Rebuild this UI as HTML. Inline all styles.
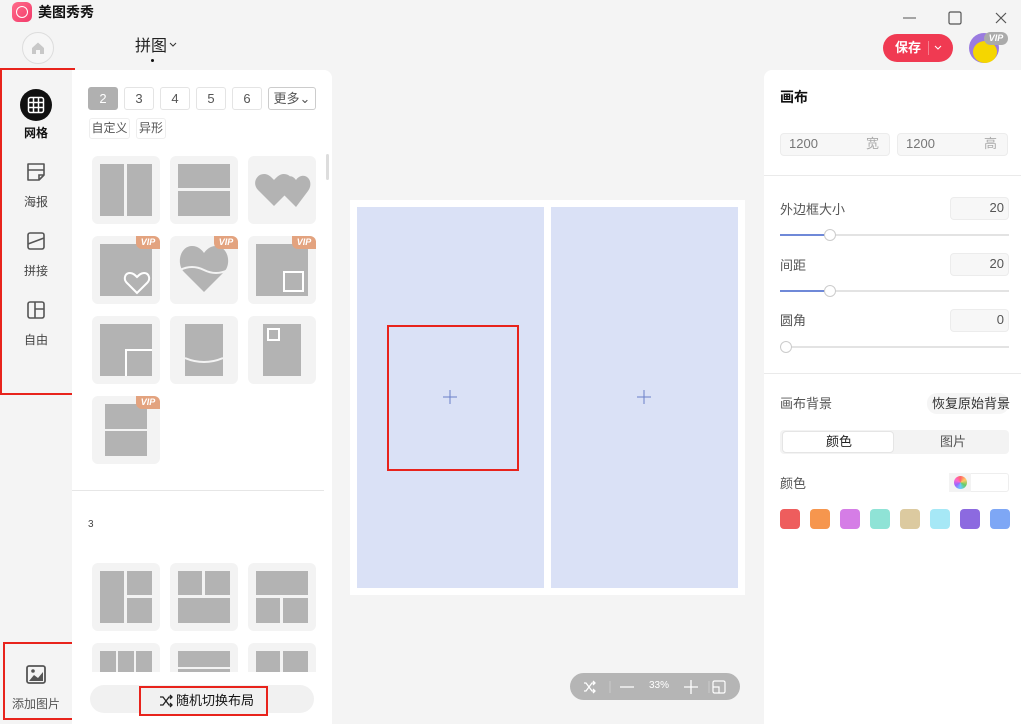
<!DOCTYPE html>
<html><head><meta charset="utf-8"><style>
*{margin:0;padding:0;box-sizing:border-box}
body{width:1021px;height:724px;background:#f4f4f4;position:relative;overflow:hidden;font-family:"Liberation Sans","Noto Sans CJK SC",sans-serif;color:#333}
.a{position:absolute}
.t{position:absolute;font-size:13px;white-space:nowrap;line-height:1}
.tile{position:absolute;width:68px;height:68px;background:#f3f3f3;border-radius:6px}
.g{position:absolute;background:#b3b3b3}
.vip{position:absolute;right:0;top:0;width:24px;height:13px;background:#e3a37f;color:#fff;font-size:9px;font-style:italic;font-weight:bold;text-align:center;line-height:13px;border-radius:0 6px 0 6px}
.tab{position:absolute;top:87px;height:23px;border:1px solid #e4e4e4;border-radius:3px;font-size:13px;text-align:center;line-height:21px;color:#555;background:#fff}
.inp{position:absolute;background:#f7f7f7;border:1px solid #ececec;border-radius:4px;font-size:13px;color:#777;line-height:20px}
.sw{position:absolute;top:509px;width:20px;height:20px;border-radius:4px}
.red{position:absolute;border:2px solid #e8231c}
</style></head><body>
<!-- header -->
<div class="a" style="left:12px;top:2px;width:20px;height:20px;border-radius:6px;background:linear-gradient(135deg,#ff6b8a,#f23a6a)"></div>
<div class="a" style="left:16px;top:6px;width:12px;height:12px;border-radius:50%;border:1.5px solid #fff"></div>
<div class="t" style="left:38px;top:5px;font-size:14px;color:#111;font-weight:bold">美图秀秀</div>
<div class="a" style="left:22px;top:32px;width:32px;height:32px;border-radius:50%;border:1px solid #ddd;background:#f6f6f6"></div>
<svg class="a" style="left:30px;top:40px" width="16" height="16" viewBox="0 0 16 16"><path d="M2 8L8 2.5 14 8V14H10V10H6V14H2Z" fill="#c8c8c8"/></svg>
<div class="t" style="left:135px;top:39px;font-size:16px;color:#222">拼图</div>
<svg class="a" style="left:169px;top:42px" width="8" height="6"><path d="M1 1L4 4 7 1" stroke="#333" fill="none"/></svg>
<div class="a" style="left:151px;top:59px;width:3px;height:3px;border-radius:50%;background:#111"></div>
<svg class="a" style="left:900px;top:10px" width="110" height="16"><path d="M3 8H16" stroke="#555"/><rect x="49" y="2" width="12" height="12" rx="1.5" stroke="#555" fill="none" stroke-width="1.2"/><path d="M96 3L106 13M106 3L96 13" stroke="#555" stroke-width="1.2"/></svg>
<div class="a" style="left:883px;top:34px;width:70px;height:28px;border-radius:14px;background:#f03a52"></div>
<div class="t" style="left:895px;top:41px;color:#fff;font-weight:bold;font-size:13px">保存</div>
<div class="a" style="left:928px;top:41px;width:1px;height:14px;background:#f58090"></div>
<svg class="a" style="left:934px;top:45px" width="8" height="6"><path d="M1 1L4 4 7 1" stroke="#fff" fill="none"/></svg>
<div class="a" style="left:969px;top:33px;width:30px;height:30px;border-radius:50%;background:#9a7be0"></div>
<div class="a" style="left:973px;top:41px;width:24px;height:22px;border-radius:50%;background:#f5d600"></div>
<div class="a" style="left:984px;top:32px;width:24px;height:13px;border-radius:7px;background:#aaa;color:#fff;font-size:9px;font-style:italic;font-weight:bold;text-align:center;line-height:13px">VIP</div>

<!-- left sidebar -->
<div class="red" style="left:0;top:68px;width:75px;height:327px"></div>
<div class="a" style="left:20px;top:89px;width:32px;height:32px;border-radius:50%;background:#111"></div>
<svg class="a" style="left:27px;top:96px" width="18" height="18"><rect x="1.5" y="1.5" width="15" height="15" rx="2" stroke="#fff" fill="none" stroke-width="1.5"/><path d="M6.5 2V16M11.5 2V16M2 6.5H16M2 11.5H16" stroke="#fff" stroke-width="1.5"/></svg>
<div class="t" style="left:24px;top:127px;font-size:12px;font-weight:bold;color:#111">网格</div>
<svg class="a" style="left:25px;top:161px" width="22" height="22"><path d="M3 3H19V14L14 19H3Z" stroke="#555" fill="none" stroke-width="1.6" stroke-linejoin="round"/><path d="M3 9H19M14 19V14H19" stroke="#555" fill="none" stroke-width="1.6"/></svg>
<div class="t" style="left:24px;top:196px;font-size:12px;color:#444">海报</div>
<svg class="a" style="left:25px;top:230px" width="22" height="22"><rect x="3" y="3" width="16" height="16" rx="2" stroke="#555" fill="none" stroke-width="1.6"/><path d="M3 14L19 8" stroke="#555" stroke-width="1.6"/></svg>
<div class="t" style="left:24px;top:265px;font-size:12px;color:#444">拼接</div>
<svg class="a" style="left:25px;top:299px" width="22" height="22"><rect x="3" y="3" width="16" height="16" rx="2" stroke="#555" fill="none" stroke-width="1.6"/><path d="M10 3V19M10 10H19" stroke="#555" stroke-width="1.6"/></svg>
<div class="t" style="left:24px;top:334px;font-size:12px;color:#444">自由</div>
<div class="red" style="left:3px;top:642px;width:73px;height:78px"></div>
<svg class="a" style="left:25px;top:664px" width="22" height="22"><rect x="2" y="2" width="18" height="17" rx="2" stroke="#555" fill="none" stroke-width="1.8"/><path d="M4 17L9 11 13 14 18 8V17Z" fill="#555"/><circle cx="8" cy="7" r="1.8" fill="#555"/></svg>
<div class="t" style="left:12px;top:698px;font-size:12px;color:#555">添加图片</div>

<!-- template panel -->
<div class="a" style="left:72px;top:70px;width:260px;height:654px;background:#fff;border-radius:0 8px 0 0"></div>
<div class="tab" style="left:88px;width:30px;background:#b0b0b0;color:#fff;border-color:#b0b0b0">2</div>
<div class="tab" style="left:124px;width:30px">3</div>
<div class="tab" style="left:160px;width:30px">4</div>
<div class="tab" style="left:196px;width:30px">5</div>
<div class="tab" style="left:232px;width:30px">6</div>
<div class="tab" style="left:268px;width:48px;border-color:#ccc">更多⌄</div>
<div class="tab" style="left:89px;top:118px;width:41px;height:21px;line-height:19px;font-size:12px;border-color:#eee">自定义</div>
<div class="tab" style="left:136px;top:118px;width:30px;height:21px;line-height:19px;font-size:12px;border-color:#eee">异形</div>
<div class="a" style="left:326px;top:154px;width:3px;height:26px;background:#ddd;border-radius:2px"></div>

<!-- row1 -->
<div class="tile" style="left:92px;top:156px"><div class="g" style="left:8px;top:8px;width:24px;height:52px"></div><div class="g" style="left:35px;top:8px;width:25px;height:52px"></div></div>
<div class="tile" style="left:170px;top:156px"><div class="g" style="left:8px;top:8px;width:52px;height:24px"></div><div class="g" style="left:8px;top:35px;width:52px;height:25px"></div></div>
<div class="tile" style="left:248px;top:156px"><svg class="a" style="left:4px;top:14px" width="62" height="40"><path d="M22 36L6 20C0 14 4 4 12 4 17 4 20 8 22 10 24 8 27 4 32 4 40 4 44 14 38 20Z" fill="#b3b3b3"/><path d="M44 37L30 23C34 18 33 10 35 8 38 5 41 6 44 10 46 7 49 5 53 6 59 8 60 16 56 21Z" fill="#b3b3b3"/></svg></div>
<!-- row2 -->
<div class="tile" style="left:92px;top:236px"><div class="g" style="left:8px;top:8px;width:52px;height:52px"></div><svg class="a" style="left:30px;top:33px" width="30" height="27"><path d="M15 24L5 14C1 10 3 4 8 4 11 4 13 6 15 8 17 6 19 4 22 4 27 4 29 10 25 14Z" stroke="#fff" stroke-width="2" fill="none"/></svg><div class="vip">VIP</div></div>
<div class="tile" style="left:170px;top:236px"><svg class="a" style="left:8px;top:8px" width="52" height="50"><path d="M26 48L6 28C-2 20 2 2 14 2 20 2 24 6 26 9 28 6 32 2 38 2 50 2 54 20 46 28Z" fill="#b3b3b3"/><path d="M2 26Q14 20 26 26T50 26" stroke="#f3f3f3" stroke-width="2" fill="none"/></svg><div class="vip">VIP</div></div>
<div class="tile" style="left:248px;top:236px"><div class="g" style="left:8px;top:8px;width:52px;height:52px"></div><div class="a" style="left:35px;top:35px;width:21px;height:21px;border:2px solid #fff"></div><div class="vip">VIP</div></div>
<!-- row3 -->
<div class="tile" style="left:92px;top:316px"><div class="g" style="left:8px;top:8px;width:52px;height:52px"></div><div class="a" style="left:33px;top:33px;width:27px;height:27px;border-left:2px solid #fff;border-top:2px solid #fff"></div></div>
<div class="tile" style="left:170px;top:316px"><div class="g" style="left:15px;top:8px;width:38px;height:52px"></div><svg class="a" style="left:15px;top:40px" width="38" height="12"><path d="M0 2Q19 10 38 2" stroke="#f3f3f3" stroke-width="2" fill="none"/></svg></div>
<div class="tile" style="left:248px;top:316px"><div class="g" style="left:15px;top:8px;width:38px;height:52px"></div><div class="a" style="left:19px;top:12px;width:13px;height:13px;border:2px solid #fff"></div></div>
<!-- row4 -->
<div class="tile" style="left:92px;top:396px"><div class="g" style="left:13px;top:8px;width:42px;height:25px"></div><div class="g" style="left:13px;top:35px;width:42px;height:25px"></div><div class="vip">VIP</div></div>

<div class="a" style="left:72px;top:490px;width:252px;height:1px;background:#e6e6e6"></div>
<div class="t" style="left:88px;top:520px;font-size:10px;color:#444">3</div>
<div class="tile" style="left:92px;top:563px"><div class="g" style="left:8px;top:8px;width:24px;height:52px"></div><div class="g" style="left:35px;top:8px;width:25px;height:24px"></div><div class="g" style="left:35px;top:35px;width:25px;height:25px"></div></div>
<div class="tile" style="left:170px;top:563px"><div class="g" style="left:8px;top:8px;width:24px;height:24px"></div><div class="g" style="left:35px;top:8px;width:25px;height:24px"></div><div class="g" style="left:8px;top:35px;width:52px;height:25px"></div></div>
<div class="tile" style="left:248px;top:563px"><div class="g" style="left:8px;top:8px;width:52px;height:24px"></div><div class="g" style="left:8px;top:35px;width:24px;height:25px"></div><div class="g" style="left:35px;top:35px;width:25px;height:25px"></div></div>
<div class="a" style="left:92px;top:643px;width:230px;height:29px;overflow:hidden">
<div class="tile" style="left:0;top:0"><div class="g" style="left:8px;top:8px;width:16px;height:52px"></div><div class="g" style="left:26px;top:8px;width:16px;height:52px"></div><div class="g" style="left:44px;top:8px;width:16px;height:52px"></div></div>
<div class="tile" style="left:78px;top:0"><div class="g" style="left:8px;top:8px;width:52px;height:16px"></div><div class="g" style="left:8px;top:26px;width:52px;height:16px"></div></div>
<div class="tile" style="left:156px;top:0"><div class="g" style="left:8px;top:8px;width:24px;height:52px"></div><div class="g" style="left:35px;top:8px;width:25px;height:52px"></div></div>
</div>
<div class="a" style="left:90px;top:685px;width:224px;height:28px;border-radius:14px;background:#f1f1f1"></div>
<div class="red" style="left:139px;top:686px;width:129px;height:30px;background:#f1f1f1"></div>
<svg class="a" style="left:159px;top:694px" width="14" height="14"><path d="M1 3H4L10 11H13M1 11H4L10 3H13M11 1L13 3 11 5M11 9L13 11 11 13" stroke="#222" fill="none" stroke-width="1.3"/></svg>
<div class="t" style="left:176px;top:694px;font-size:13px;color:#111">随机切换布局</div>

<!-- canvas -->
<div class="a" style="left:350px;top:200px;width:395px;height:395px;background:#fff"></div>
<div class="a" style="left:357px;top:207px;width:187px;height:381px;background:#dae1f6"></div>
<div class="a" style="left:551px;top:207px;width:187px;height:381px;background:#dae1f6"></div>
<div class="red" style="left:387px;top:325px;width:132px;height:146px"></div>
<svg class="a" style="left:443px;top:390px" width="14" height="14"><path d="M7 0V14M0 7H14" stroke="#6a80c8" stroke-width="1"/></svg>
<svg class="a" style="left:637px;top:390px" width="14" height="14"><path d="M7 0V14M0 7H14" stroke="#6a80c8" stroke-width="1"/></svg>
<div class="a" style="left:570px;top:673px;width:170px;height:27px;border-radius:14px;background:#b5b5b5"></div>
<svg class="a" style="left:580px;top:679px" width="155" height="16"><path d="M4 4H6L12 12H15M4 12H6L12 4H15M13 2L15 4 13 6M13 10L15 12 13 14" stroke="#fff" fill="none" stroke-width="1.3"/><path d="M30 2V14M129 2V14" stroke="#ccc"/><path d="M40 8H54M104 8H118M111 1V15" stroke="#fff" stroke-width="1.3"/><rect x="133" y="2" width="12" height="12" rx="1.5" stroke="#fff" fill="none" stroke-width="1.2"/><path d="M133 8H139V14" stroke="#fff" fill="none" stroke-width="1.2"/></svg>
<div class="t" style="left:649px;top:681px;font-size:10px;color:#fff">33%</div>

<!-- right panel -->
<div class="a" style="left:764px;top:70px;width:257px;height:654px;background:#fff;border-radius:8px 0 0 0"></div>
<div class="t" style="left:780px;top:90px;font-size:14px;font-weight:bold;color:#111">画布</div>
<div class="inp" style="left:780px;top:133px;width:110px;height:23px;padding-left:8px">1200<span style="position:absolute;right:10px;color:#aaa">宽</span></div>
<div class="inp" style="left:897px;top:133px;width:111px;height:23px;padding-left:8px">1200<span style="position:absolute;right:10px;color:#aaa">高</span></div>
<div class="a" style="left:764px;top:175px;width:257px;height:1px;background:#eaeaea"></div>
<div class="t" style="left:780px;top:203px;color:#555">外边框大小</div>
<div class="inp" style="left:950px;top:197px;width:59px;height:23px;text-align:right;padding-right:4px;color:#555">20</div>
<div class="a" style="left:780px;top:234px;width:229px;height:2px;background:#e3e3e3"></div><div class="a" style="left:780px;top:234px;width:50px;height:2px;background:#6f89d8"></div><div class="a" style="left:824px;top:229px;width:12px;height:12px;border-radius:50%;background:#fff;border:1px solid #ccc"></div>
<div class="t" style="left:780px;top:259px;color:#555">间距</div>
<div class="inp" style="left:950px;top:253px;width:59px;height:23px;text-align:right;padding-right:4px;color:#555">20</div>
<div class="a" style="left:780px;top:290px;width:229px;height:2px;background:#e3e3e3"></div><div class="a" style="left:780px;top:290px;width:50px;height:2px;background:#6f89d8"></div><div class="a" style="left:824px;top:285px;width:12px;height:12px;border-radius:50%;background:#fff;border:1px solid #ccc"></div>
<div class="t" style="left:780px;top:314px;color:#555">圆角</div>
<div class="inp" style="left:950px;top:309px;width:59px;height:23px;text-align:right;padding-right:4px;color:#555">0</div>
<div class="a" style="left:780px;top:346px;width:229px;height:2px;background:#e3e3e3"></div><div class="a" style="left:780px;top:341px;width:12px;height:12px;border-radius:50%;background:#fff;border:1px solid #ccc"></div>
<div class="a" style="left:764px;top:373px;width:257px;height:1px;background:#eaeaea"></div>
<div class="t" style="left:780px;top:397px;color:#555">画布背景</div>
<div class="a" style="left:927px;top:393px;width:82px;height:21px;border-radius:10px;background:#f5f5f5"></div>
<div class="t" style="left:932px;top:397px;color:#333">恢复原始背景</div>
<div class="a" style="left:780px;top:430px;width:229px;height:24px;background:#f3f3f3;border-radius:4px"></div>
<div class="a" style="left:782px;top:431px;width:112px;height:22px;background:#fff;border:1px solid #e5e5e5;border-radius:4px"></div>
<div class="t" style="left:826px;top:435px;color:#222">颜色</div>
<div class="t" style="left:940px;top:435px;color:#555">图片</div>
<div class="t" style="left:780px;top:477px;color:#555">颜色</div>
<div class="a" style="left:949px;top:473px;width:60px;height:19px;border:1px solid #eee;border-radius:3px;background:#fff"></div>
<div class="a" style="left:949px;top:473px;width:22px;height:19px;background:#f3f3f3"></div>
<div class="a" style="left:954px;top:476px;width:13px;height:13px;border-radius:50%;background:conic-gradient(#f66,#fc6,#6c6,#6cf,#96f,#f6c,#f66)"></div>
<div class="sw" style="left:780px;background:#ee5d5d"></div>
<div class="sw" style="left:810px;background:#f6964e"></div>
<div class="sw" style="left:840px;background:#d57de6"></div>
<div class="sw" style="left:870px;background:#8fe3d6"></div>
<div class="sw" style="left:900px;background:#dccaa0"></div>
<div class="sw" style="left:930px;background:#a6e8f6"></div>
<div class="sw" style="left:960px;background:#8c6ae0"></div>
<div class="sw" style="left:990px;background:#7ea7f5"></div>
</body></html>
